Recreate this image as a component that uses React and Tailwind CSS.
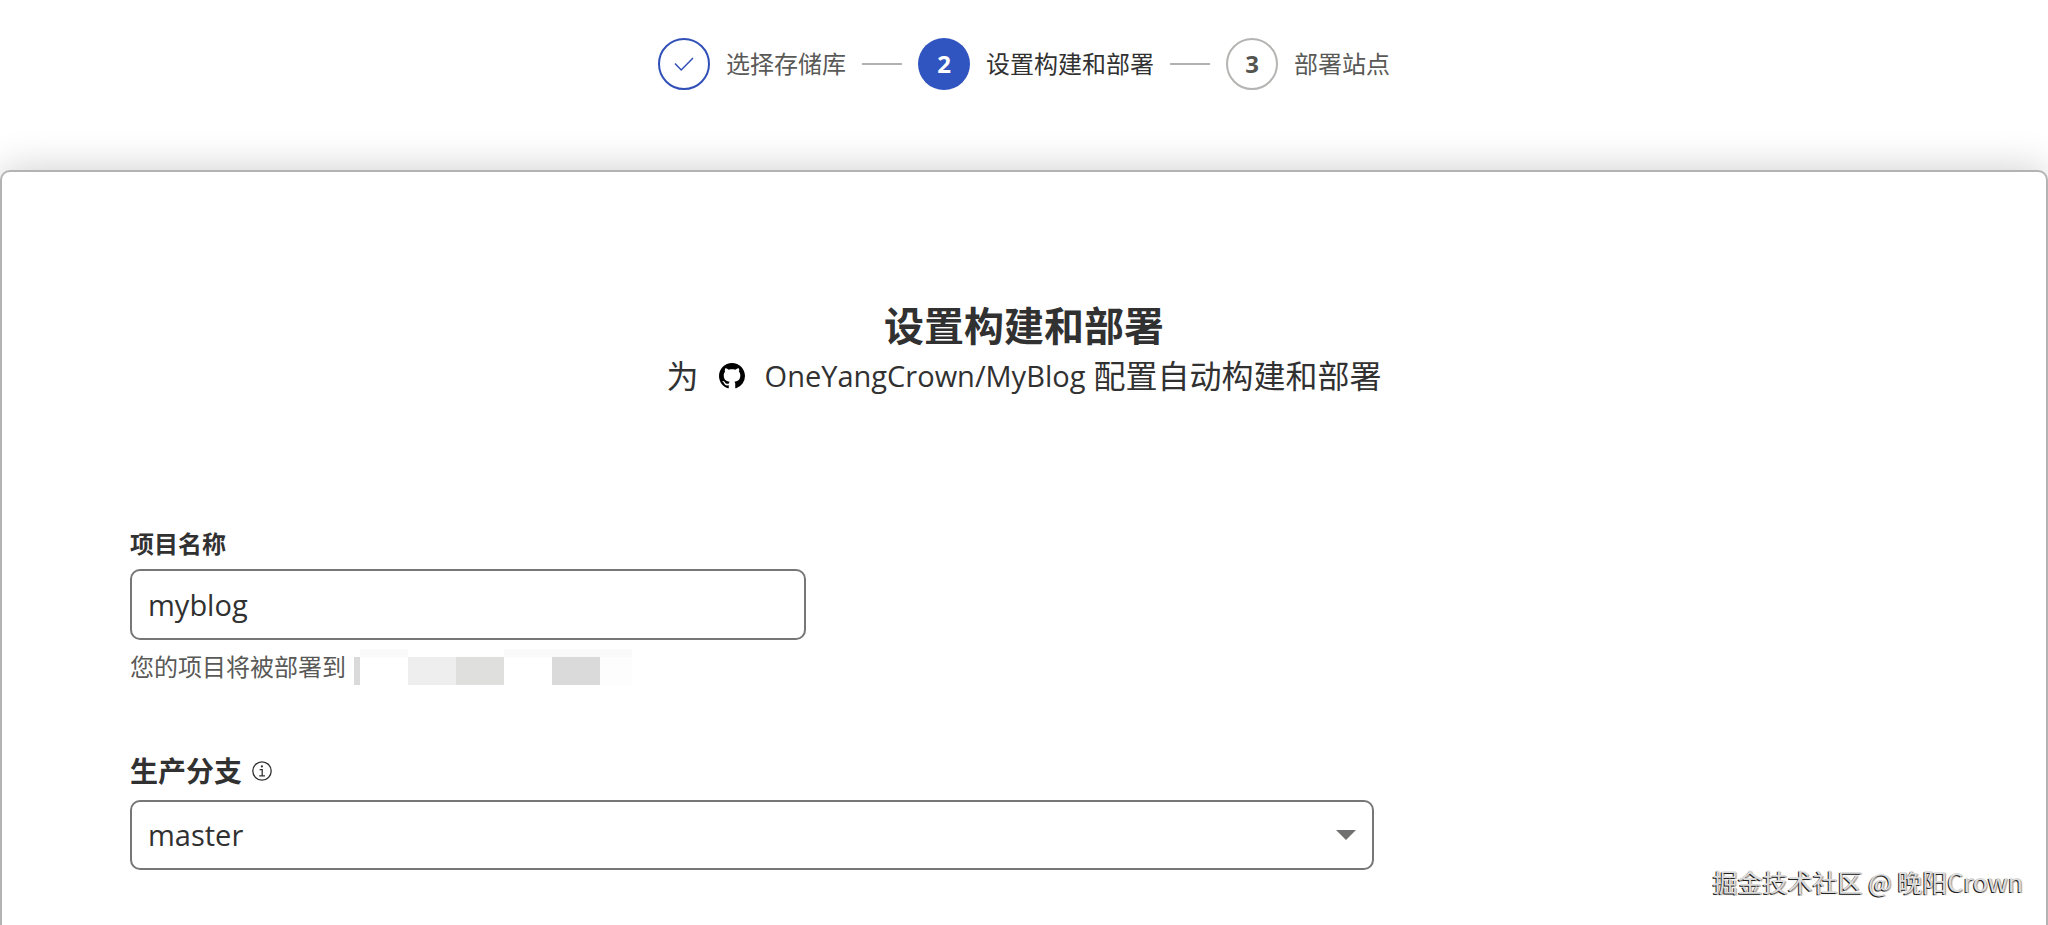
const steps = [
  { label: "选择存储库", state: "done" },
  { label: "设置构建和部署", state: "current" },
  { label: "部署站点", state: "next" },
];

const circleStyles = {
  done: "border-2 border-[#3050b8] bg-white text-[#3050b8]",
  current: "bg-[#3155c0] text-white",
  next: "border-2 border-[#b4b4b2] bg-white text-[#545450]",
};

const labelStyles = {
  done: "text-[#595957]",
  current: "text-[#313131]",
  next: "text-[#595957]",
};

function CheckIcon() {
  return (
    <svg className="size-6" viewBox="0 0 24 24" fill="none" stroke="currentColor" strokeWidth="1.5" aria-hidden="true">
      <path d="M3 11.5 9.2 18 21 6" />
    </svg>
  );
}

function GitHubIcon() {
  return (
    <svg className="size-[26px] text-black" viewBox="0 0 16 16" fill="currentColor" role="img" aria-label="GitHub">
      <path d="M8 0C3.58 0 0 3.58 0 8c0 3.54 2.29 6.53 5.47 7.59.4.07.55-.17.55-.38 0-.19-.01-.82-.01-1.49-2.01.37-2.53-.49-2.69-.94-.09-.23-.48-.94-.82-1.13-.28-.15-.68-.52-.01-.53.63-.01 1.08.58 1.23.82.72 1.21 1.87.87 2.33.66.07-.52.28-.87.51-1.07-1.78-.2-3.64-.89-3.64-3.95 0-.87.31-1.59.82-2.15-.08-.2-.36-1.02.08-2.12 0 0 .67-.21 2.2.82.64-.18 1.32-.27 2-.27s1.36.09 2 .27c1.53-1.04 2.2-.82 2.2-.82.44 1.1.16 1.92.08 2.12.51.56.82 1.27.82 2.15 0 3.07-1.87 3.75-3.65 3.95.29.25.54.73.54 1.48 0 1.07-.01 1.93-.01 2.2 0 .21.15.46.55.38A8.01 8.01 0 0 0 16 8c0-4.42-3.58-8-8-8z" />
    </svg>
  );
}

function InfoIcon() {
  return (
    <svg className="size-5" viewBox="0 0 20 20" fill="none" stroke="currentColor" strokeWidth="1.3" aria-hidden="true">
      <circle cx="10" cy="10" r="9.2" />
      <circle cx="9.9" cy="5.4" r="1.1" fill="currentColor" stroke="none" />
      <path d="M7.6 8.6h2.6v6.2M7.2 14.9h5.8" />
    </svg>
  );
}

function Steps() {
  return (
    <ol className="flex flex-wrap items-center justify-center gap-4 px-4 pt-[38px] pb-20">
      {steps.map((step, i) => (
        <li key={step.label} className="flex items-center gap-4" aria-current={step.state === "current" ? "step" : undefined}>
          {i > 0 && <span className="h-0.5 w-10 bg-[#b2b2b0]" />}
          <span className={`flex size-[52px] items-center justify-center rounded-full text-2xl font-bold ${circleStyles[step.state]}`}>
            {step.state === "done" ? <CheckIcon /> : i + 1}
          </span>
          <span className={`text-2xl ${labelStyles[step.state]}`}>{step.label}</span>
        </li>
      ))}
    </ol>
  );
}

function MaskedAddress() {
  return (
    <span className="flex flex-col" aria-hidden="true">
      <span className="flex h-2">
        <span className="w-1.5" />
        <span className="w-12 bg-[#fafafa]" />
        <span className="w-24" />
        <span className="w-32 bg-[#fafafa]" />
      </span>
      <span className="flex h-7">
        <span className="w-1.5 bg-[#dadada]" />
        <span className="w-12" />
        <span className="w-12 bg-[#eeeeee]" />
        <span className="w-12 bg-[#dfdfdd]" />
        <span className="w-12" />
        <span className="w-12 bg-[#dadada]" />
        <span className="w-8 bg-[#fdfdfd]" />
      </span>
    </span>
  );
}

export default function App() {
  return (
    <div className="relative flex min-h-screen flex-col overflow-hidden bg-white font-['Open_Sans','Noto_Sans_CJK_SC',sans-serif] text-[#313131]">
      <Steps />
      <main className="flex-1 rounded-t-[10px] border-2 border-b-0 border-[#b3b3b3] bg-white px-32 pt-32 shadow-[0_0_40px_rgba(0,0,0,0.2)]">
        <header className="flex flex-col items-center">
          <h1 className="text-[40px] leading-[52px] font-bold">设置构建和部署</h1>
          <p className="flex items-center text-[32px] leading-[48px]">
            <span className="mr-5">为</span>
            <GitHubIcon />
            <span className="ml-5 text-[29px]">OneYangCrown/MyBlog</span>
            <span className="ml-2">配置自动构建和部署</span>
          </p>
        </header>

        <form className="mt-32">
          <div>
            <label htmlFor="project-name" className="block text-2xl leading-8 font-bold">
              项目名称
            </label>
            <input
              id="project-name"
              type="text"
              defaultValue="myblog"
              className="mt-[9px] block h-[71px] w-[676px] max-w-full rounded-[10px] border-2 border-[#777777] bg-white px-4 text-[29px] outline-none"
            />
            <p className="mt-[9px] flex items-center gap-2 text-2xl leading-9 text-[#595957]">
              您的项目将被部署到
              <MaskedAddress />
            </p>
          </div>

          <div className="mt-[66px]">
            <div className="flex items-center gap-2.5">
              <label htmlFor="branch" className="text-[28px] leading-10 font-bold">
                生产分支
              </label>
              <button type="button" aria-label="生产分支说明">
                <InfoIcon />
              </button>
            </div>
            <div className="relative mt-[9px] w-[1244px] max-w-full">
              <select
                id="branch"
                defaultValue="master"
                className="block h-[70px] w-full appearance-none rounded-[10px] border-2 border-[#777777] bg-white px-4 text-[29px] outline-none"
              >
                <option value="master">master</option>
              </select>
              <svg className="pointer-events-none absolute top-1/2 right-[18px] h-2.5 w-5 -translate-y-1/2" viewBox="0 0 20 10" fill="#70716f" aria-hidden="true">
                <path d="M0 0h20L10 10z" />
              </svg>
            </div>
          </div>
        </form>
      </main>
      <p className="absolute right-[25px] bottom-6 font-['Noto_Sans_CJK_SC',sans-serif] text-[25px] leading-10 text-[#dcdcdc] [text-shadow:-1px_1px_0_#222222,1px_1px_1px_#999999]">
        掘金技术社区 @ 晚阳Crown
      </p>
    </div>
  );
}
